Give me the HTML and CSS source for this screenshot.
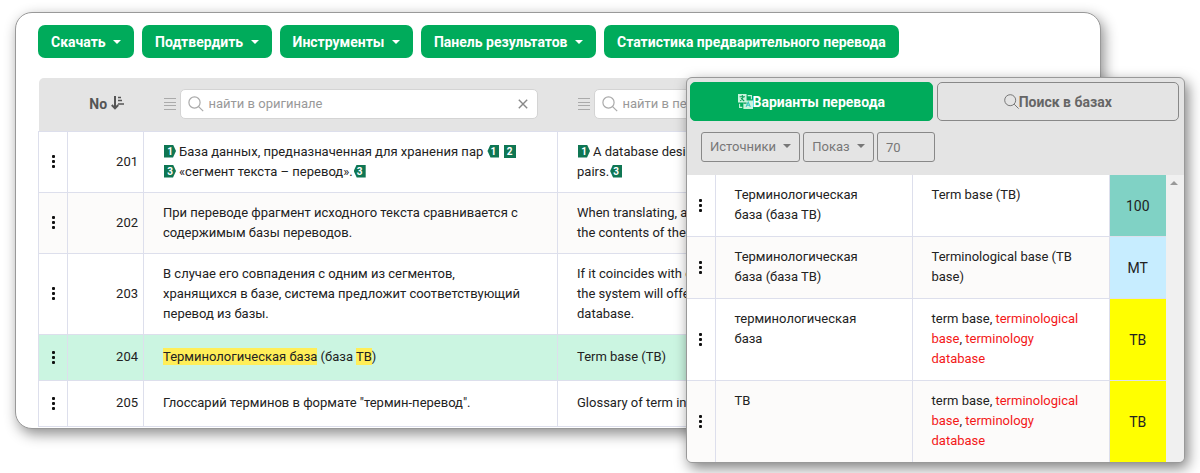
FILE: index.html
```html
<!DOCTYPE html>
<html lang="ru">
<head>
<meta charset="utf-8">
<title>Редактор перевода</title>
<link rel="stylesheet" href="styles.css">
</head>

<body>
<div class="editor">

<div class="toolbar">
	<button class="btn" type="button">Скачать <span class="caret"></span></button>
	<button class="btn" type="button">Подтвердить <span class="caret"></span></button>
	<button class="btn" type="button">Инструменты <span class="caret"></span></button>
	<button class="btn" type="button">Панель результатов <span class="caret"></span></button>
	<button class="btn" type="button">Статистика предварительного перевода</button>
</div>

<table class="grid segments">
	<colgroup>
		<col class="col-menu">
		<col class="col-no">
		<col class="col-text">
		<col>
	</colgroup>
	<thead>
	<tr>
		<th colspan="2" class="no">No
			<svg class="sort" width="14" height="14" viewBox="0 0 14 14" fill="none" stroke="#555" stroke-width="2"><path d="M4 0v12M0.8 9L4 12.4L7.2 9"/><path d="M7 1.5h3M7 4.5h4M7 8h6" stroke-width="1.6"/></svg>
		</th>
		<th>
			<div class="filter">
				<svg width="12" height="14" viewBox="0 0 12 14" stroke="#aaa"><path d="M0 1.5h12M0 5.5h12M0 8.5h12M0 12.5h12"/></svg>
				<div class="searchbox">
					<svg width="16" height="16" viewBox="0 0 16 16" fill="none" stroke="#aaa" stroke-width="1.2"><circle cx="6.5" cy="6.5" r="5.6"/><path d="M10.6 10.6l4.6 4.6"/></svg>
					<input type="text" aria-label="найти в оригинале" placeholder="найти в оригинале">
					<button class="clear" type="button" aria-label="Очистить"><svg width="10" height="10" viewBox="0 0 10 10" stroke="#888" stroke-width="1.4"><path d="M0.8 0.8l8.4 8.4M9.2 0.8l-8.4 8.4"/></svg></button>
				</div>
			</div>
		</th>
		<th>
			<div class="filter">
				<svg width="12" height="14" viewBox="0 0 12 14" stroke="#aaa"><path d="M0 1.5h12M0 5.5h12M0 8.5h12M0 12.5h12"/></svg>
				<div class="searchbox">
					<svg width="16" height="16" viewBox="0 0 16 16" fill="none" stroke="#aaa" stroke-width="1.2"><circle cx="6.5" cy="6.5" r="5.6"/><path d="M10.6 10.6l4.6 4.6"/></svg>
					<input type="text" aria-label="найти в переводе" placeholder="найти в переводе">
				</div>
			</div>
		</th>
	</tr>
	</thead>
	<tbody>
	<tr>
		<td class="menu"><button class="dots" type="button" aria-label="Меню"><i></i><i></i><i></i></button></td>
		<td class="no">201</td>
		<td><span class="tag open">1</span>База данных, предназначенная для хранения пар <span class="tag close">1</span> <span class="tag">2</span><br><span class="tag open">3</span>«сегмент текста – перевод».<span class="tag close">3</span></td>
		<td><span class="tag open">1</span>A database designed to store segment<br>pairs.<span class="tag close">3</span></td>
	</tr>
	<tr>
		<td class="menu"><button class="dots" type="button" aria-label="Меню"><i></i><i></i><i></i></button></td>
		<td class="no">202</td>
		<td>При переводе фрагмент исходного текста сравнивается с<br>содержимым базы переводов.</td>
		<td>When translating, a fragment is compared with<br>the contents of the translation database.</td>
	</tr>
	<tr>
		<td class="menu"><button class="dots" type="button" aria-label="Меню"><i></i><i></i><i></i></button></td>
		<td class="no">203</td>
		<td>В случае его совпадения с одним из сегментов,<br>хранящихся в базе, система предложит соответствующий<br>перевод из базы.</td>
		<td>If it coincides with one of the stored segments,<br>the system will offer the translation from the<br>database.</td>
	</tr>
	<tr class="current">
		<td class="menu"><button class="dots" type="button" aria-label="Меню"><i></i><i></i><i></i></button></td>
		<td class="no">204</td>
		<td><mark>Терминологическая база</mark> (база <mark>ТВ</mark>)</td>
		<td>Term base (TB)</td>
	</tr>
	<tr>
		<td class="menu"><button class="dots" type="button" aria-label="Меню"><i></i><i></i><i></i></button></td>
		<td class="no">205</td>
		<td>Глоссарий терминов в формате "термин-перевод".</td>
		<td>Glossary of term in the "term-translation" format.</td>
	</tr>
	</tbody>
</table>

</div>

<div class="results">

<div class="tabs">
	<button class="tab active" type="button"><svg width="15" height="15" viewBox="0 0 14 14"><path fill="#c9f3dc" d="M0 0h8v8h-8zM5 6h9v8h-9zM9 1h4v4h-1v-3h-3zM1 9h1v3h2v1h-3z"/><path fill="none" stroke="#0a9f58" d="M1.5 2.5h5M4 1v1.5M2.2 6.5l3-4M2.8 4l3 2.5M5 8.5h3"/><path fill="none" stroke="#35c6c0" d="M7.5 12l2-4.5l2 4.5M8.3 10.5h2.4"/></svg>Варианты перевода</button>
	<button class="tab" type="button"><svg width="15" height="15" viewBox="0 0 15 15" fill="none" stroke="#777"><circle cx="6.2" cy="6.2" r="5.5"/><path d="M10.2 10.2l4.4 4.4"/></svg>Поиск в базах</button>
</div>

<div class="options">
	<button class="opt" type="button">Источники <span class="caret"></span></button>
	<button class="opt" type="button">Показ <span class="caret"></span></button>
	<input class="opt percent" type="text" aria-label="Процент совпадения" value="70">
</div>

<div class="variants">
<table class="grid">
	<colgroup>
		<col class="col-dots">
		<col>
		<col>
		<col class="col-match">
	</colgroup>
	<tbody>
	<tr>
		<td class="menu"><button class="dots" type="button" aria-label="Меню"><i></i><i></i><i></i></button></td>
		<td>Терминологическая<br>база (база ТВ)</td>
		<td>Term base (TB)</td>
		<td class="match m100">100</td>
	</tr>
	<tr>
		<td class="menu"><button class="dots" type="button" aria-label="Меню"><i></i><i></i><i></i></button></td>
		<td>Терминологическая<br>база (база ТВ)</td>
		<td>Terminological base (TB<br>base)</td>
		<td class="match mt">MT</td>
	</tr>
	<tr>
		<td class="menu"><button class="dots" type="button" aria-label="Меню"><i></i><i></i><i></i></button></td>
		<td>терминологическая<br>база</td>
		<td>term base, <em>terminological</em><br><em>base</em>, <em>terminology</em><br><em>database</em></td>
		<td class="match tb">TB</td>
	</tr>
	<tr>
		<td class="menu"><button class="dots" type="button" aria-label="Меню"><i></i><i></i><i></i></button></td>
		<td>ТВ</td>
		<td>term base, <em>terminological</em><br><em>base</em>, <em>terminology</em><br><em>database</em></td>
		<td class="match tb">TB</td>
	</tr>
	</tbody>
</table>
<div class="scroll"><span class="up"></span></div>
</div>

</div>
</body>

</html>
```
FILE: styles.css
```css
* {
	box-sizing: border-box;
}
body {
	margin: 0;
	padding: 12px 99px 44px 15px;
	background: #fff;
	color: #222;
	font: 13px/20px Roboto, "Liberation Sans", sans-serif;
}
button, input {
	font: inherit;
	color: inherit;
	margin: 0;
}
button {
	border: 0;
	background: none;
	cursor: pointer;
	white-space: nowrap;
}
.editor {
	padding: 12px 14px 1px 22px;
	border: 1px solid #999;
	border-radius: 17px;
	background: #fff;
	box-shadow: 3px 5px 14px rgba(0,0,0,0.45);
}
.toolbar {
	display: flex;
	gap: 8px;
	margin-bottom: 20px;
}
.btn {
	height: 33px;
	padding: 0 13px;
	border-radius: 7px;
	background: #00ab5b;
	color: #fff;
	font-size: 14px;
	font-weight: bold;
}
.caret {
	display: inline-block;
	margin-left: 4px;
	vertical-align: 3px;
	border: 4px solid transparent;
	border-top-color: currentColor;
	border-bottom: 0;
}

/* tables */
.grid {
	width: 100%;
	table-layout: fixed;
	border-collapse: collapse;
}
.grid td {
	height: 46px;
	padding: 10px 19px;
	border: 1px solid #dddfec;
	vertical-align: top;
}
.segments td {
	vertical-align: middle;
}
.grid tbody tr {
	background: #fff;
}
.grid tbody tr:nth-child(even) {
	background: #fcfbfa;
}
.grid td.menu {
	padding: 0;
	vertical-align: middle;
	text-align: center;
}
.grid td.no {
	padding: 0 5px;
	text-align: right;
}
.segments thead {
	background: #e4e4e4;
}
.segments th {
	height: 53px;
	padding: 0 20px;
	text-align: left;
}
.segments th:first-child {
	border-top-left-radius: 5px;
}
.segments th.no {
	padding: 0 19px;
	color: #555;
	font-size: 14px;
	text-align: right;
}
.sort {
	vertical-align: -1px;
}
.col-menu {
	width: 29px;
}
.col-no {
	width: 76px;
}
.col-text {
	width: 414px;
}
.grid tbody tr.current {
	background: #cbf5e1;
}
mark {
	padding: 1px 0;
	background: #ffee58;
	color: inherit;
}
.dots {
	display: inline-flex;
	flex-direction: column;
	gap: 2px;
	padding: 4px;
	vertical-align: middle;
}
.dots i {
	width: 3px;
	height: 3px;
	border-radius: 1px;
	background: #111;
}
.filter {
	display: flex;
	align-items: center;
	gap: 4px;
	font-weight: normal;
}
.searchbox {
	flex: 1;
	display: flex;
	align-items: center;
	gap: 5px;
	height: 30px;
	padding: 0 7px;
	border: 1px solid #d4d4d4;
	border-radius: 5px;
	background: #fff;
}
.searchbox input {
	flex: 1;
	min-width: 0;
	padding: 0;
	border: 0;
	outline: 0;
	background: none;
}
.searchbox input::placeholder {
	color: #999;
}
.clear {
	display: flex;
	padding: 2px;
}

/* inline tags */
.tag {
	display: inline-block;
	width: 12px;
	height: 13px;
	margin: 0 3px 0 1px;
	background: #0f7653;
	color: #fff;
	font: bold 10px/13px Roboto, "Liberation Sans", sans-serif;
	text-align: center;
	vertical-align: 1px;
}
.open {
	clip-path: polygon(0 0, 75% 0, 100% 50%, 75% 100%, 0 100%);
}
.close {
	margin-right: 0;
	clip-path: polygon(25% 0, 100% 0, 100% 100%, 25% 100%, 0 50%);
}

/* results window, lies over the editor */
.results {
	position: absolute;
	top: 77px;
	right: 15px;
	width: 499px;
	overflow: hidden;
	border: 1px solid #999;
	border-radius: 6px;
	background: #e4e4e4;
	box-shadow: 3px 5px 14px rgba(0,0,0,0.5);
}
.tabs {
	display: flex;
	gap: 4px;
	padding: 4px 5px 0 3px;
}
.tab {
	flex: 1;
	display: flex;
	align-items: center;
	justify-content: center;
	height: 39px;
	border: 1px solid #888;
	border-radius: 5px;
	color: #666;
	font-size: 14px;
	font-weight: bold;
}
.tab.active {
	border-color: #00ab5b;
	background: #00ab5b;
	color: #fff;
}
.options {
	display: flex;
	gap: 3px;
	padding: 11px 14px 13px;
}
.opt {
	height: 30px;
	padding: 0 8px;
	border: 1px solid #888;
	border-radius: 3px;
	background: none;
	color: #777;
}
.percent {
	width: 58px;
}
.variants {
	display: flex;
}
.variants .grid {
	flex: 1;
}
.variants .grid td {
	padding-bottom: 11px;
}
.variants .grid tr > :first-child {
	border-left: 0;
}
.variants .grid tr:first-child td {
	border-top: 0;
}
.variants .grid tr:last-child td {
	border-bottom: 0;
}
.col-dots {
	width: 28px;
}
.col-match {
	width: 57px;
}
.variants .grid td.menu,
.variants .grid td.match {
	padding: 0;
}
.grid td.match {
	border-right: 0;
	font-size: 14px;
	text-align: center;
	vertical-align: middle;
}
.m100 {
	background: #80d2c5;
}
.mt {
	background: #c7edff;
}
.tb {
	background: #ff0;
}
.variants em {
	color: #f31818;
	font-style: normal;
}
.scroll {
	width: 18px;
	padding: 6px 4px;
	background: #f0f0f0;
}
.up {
	display: block;
	width: 8px;
	border: 4px solid transparent;
	border-bottom-color: #999;
	border-top: 0;
}
```
